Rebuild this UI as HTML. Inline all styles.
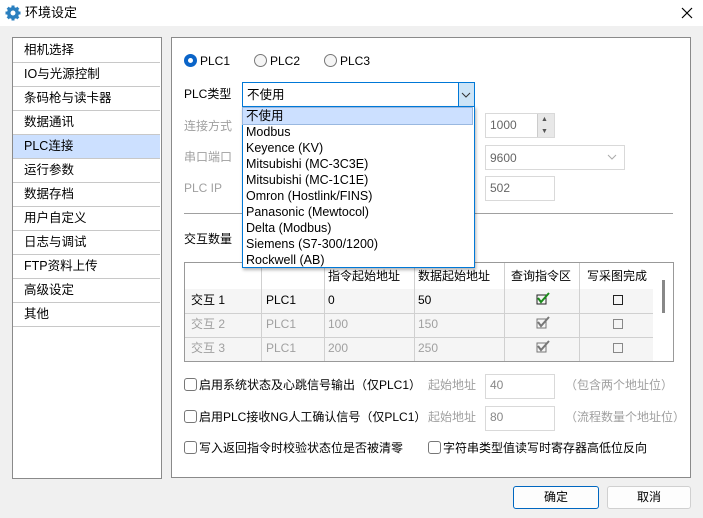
<!DOCTYPE html>
<html><head><meta charset="utf-8"><style>
*{box-sizing:border-box;margin:0;padding:0}
body{width:703px;height:518px;overflow:hidden;background:#f0f0f0;font-family:"Liberation Sans","Noto Sans CJK SC",sans-serif;font-size:12px;color:#000;position:relative}
.a{position:absolute}
.t{position:absolute;white-space:nowrap;line-height:16px}
.g{color:#a0a0a0}
.box{position:absolute;background:#fff;border:1px solid #d9d9d9}
.cb{position:absolute;width:13px;height:13px;border:1px solid #777;border-radius:3px;background:#fff}
.li{position:absolute;left:0;width:147px;height:24px;border-bottom:1px solid #c8c8c8;padding-left:11px;line-height:23px;font-size:12.5px}
.rad{position:absolute;width:13px;height:13px;border:1px solid #777;border-radius:50%;background:#f5f5f5}
.dd div{height:16px;line-height:16px;padding-left:3px;font-size:12.5px}
</style></head><body>
<div class="a" style="left:0;top:0;width:703px;height:26px;background:#fff"></div>
<svg class="a" style="left:5px;top:5px" width="16" height="16" viewBox="0 0 16 16"><circle cx="8" cy="8" r="6" fill="#2a7fbf"/><g stroke="#2a7fbf" stroke-width="3"><line x1="8" y1="0.5" x2="8" y2="15.5"/><line x1="0.5" y1="8" x2="15.5" y2="8"/><line x1="2.7" y1="2.7" x2="13.3" y2="13.3"/><line x1="13.3" y1="2.7" x2="2.7" y2="13.3"/></g><circle cx="8" cy="8" r="2.5" fill="#fff"/></svg>
<div class="t" style="left:25px;top:5px;font-size:13px">环境设定</div>
<svg class="a" style="left:681px;top:7px" width="12" height="12"><path d="M1 1L11 11M11 1L1 11" stroke="#000" stroke-width="1.2"/></svg>

<div class="a" style="left:12px;top:37px;width:150px;height:442px;background:#fff;border:1px solid #8a8a8a">
<div class="li" style="top:1px">相机选择</div>
<div class="li" style="top:25px">IO与光源控制</div>
<div class="li" style="top:49px">条码枪与读卡器</div>
<div class="li" style="top:73px">数据通讯</div>
<div class="li" style="top:97px;background:#cce0ff">PLC连接</div>
<div class="li" style="top:121px">运行参数</div>
<div class="li" style="top:145px">数据存档</div>
<div class="li" style="top:169px">用户自定义</div>
<div class="li" style="top:193px">日志与调试</div>
<div class="li" style="top:217px">FTP资料上传</div>
<div class="li" style="top:241px">高级设定</div>
<div class="li" style="top:265px">其他</div>
</div>

<div class="a" style="left:171px;top:37px;width:520px;height:441px;background:#fff;border:1px solid #8a8a8a"></div>
<div class="rad" style="left:184px;top:54px;border:4px solid #0a64c8;background:#fff"></div>
<div class="t" style="left:200px;top:53px">PLC1</div>
<div class="rad" style="left:254px;top:54px"></div>
<div class="t" style="left:270px;top:53px">PLC2</div>
<div class="rad" style="left:324px;top:54px"></div>
<div class="t" style="left:340px;top:53px">PLC3</div>

<div class="t" style="left:184px;top:86px">PLC类型</div>
<div class="t g" style="left:184px;top:118px">连接方式</div>
<div class="t g" style="left:184px;top:149px">串口端口</div>
<div class="t g" style="left:184px;top:180px">PLC IP</div>

<div class="box" style="left:485px;top:113px;width:70px;height:25px"></div>
<div class="t g" style="left:490px;top:117px;color:#666">1000</div>
<div class="a" style="left:537px;top:114px;width:17px;height:23px;background:#e8e8e8;border-left:1px solid #ccc"></div>
<div class="t" style="left:541px;top:112px;font-size:7px;color:#555">▲</div>
<div class="t" style="left:541px;top:124px;font-size:7px;color:#555">▼</div>
<div class="box" style="left:485px;top:145px;width:140px;height:25px"></div>
<div class="t" style="left:490px;top:150px;color:#666">9600</div>
<svg class="a" style="left:607px;top:154px" width="10" height="6"><path d="M1 1L5 5L9 1" stroke="#aaa" fill="none"/></svg>
<div class="box" style="left:485px;top:176px;width:70px;height:25px"></div>
<div class="t" style="left:490px;top:180px;color:#666">502</div>
<div class="a" style="left:184px;top:213px;width:489px;height:1px;background:#a0a0a0"></div>
<div class="t" style="left:184px;top:231px">交互数量</div>

<div class="a" style="left:184px;top:262px;width:490px;height:100px;border:1px solid #999;background:#f5f5f5;overflow:hidden">
<div class="a" style="left:0;top:0;width:488px;height:26px;background:#fff"></div>
<div class="a" style="left:0;top:50px;width:468px;height:1px;background:#d0d0d0"></div>
<div class="a" style="left:0;top:74px;width:468px;height:1px;background:#d0d0d0"></div>
<div class="a" style="left:76px;top:0;width:1px;height:100px;background:#d0d0d0"></div>
<div class="a" style="left:139px;top:0;width:1px;height:100px;background:#d0d0d0"></div>
<div class="a" style="left:229px;top:0;width:1px;height:100px;background:#d0d0d0"></div>
<div class="a" style="left:319px;top:0;width:1px;height:100px;background:#d0d0d0"></div>
<div class="a" style="left:394px;top:0;width:1px;height:100px;background:#d0d0d0"></div>
<div class="a" style="left:468px;top:0;width:20px;height:100px;background:#fff"></div>
<div class="a" style="left:477px;top:17px;width:3px;height:33px;background:#888"></div>
<div class="t" style="left:143px;top:5px">指令起始地址</div>
<div class="t" style="left:233px;top:5px">数据起始地址</div>
<div class="t" style="left:326px;top:5px">查询指令区</div>
<div class="t" style="left:402px;top:5px">写采图完成</div>
<div class="t" style="left:6px;top:29px">交互 1</div><div class="t" style="left:81px;top:29px">PLC1</div><div class="t" style="left:143px;top:29px">0</div><div class="t" style="left:233px;top:29px">50</div>
<div class="t g" style="left:6px;top:53px">交互 2</div><div class="t g" style="left:81px;top:53px">PLC1</div><div class="t g" style="left:143px;top:53px">100</div><div class="t g" style="left:233px;top:53px">150</div>
<div class="t g" style="left:6px;top:77px">交互 3</div><div class="t g" style="left:81px;top:77px">PLC1</div><div class="t g" style="left:143px;top:77px">200</div><div class="t g" style="left:233px;top:77px">250</div>
<svg class="a" style="left:350px;top:28px" width="16" height="14"><rect x="2" y="4" width="9" height="9" fill="none" stroke="#222"/><path d="M3 7L6 11L14 2" stroke="#1a8a1a" stroke-width="2" fill="none"/></svg>
<svg class="a" style="left:350px;top:52px" width="16" height="14"><rect x="2" y="4" width="9" height="9" fill="none" stroke="#777"/><path d="M3 7L6 11L14 2" stroke="#777" stroke-width="2" fill="none"/></svg>
<svg class="a" style="left:350px;top:76px" width="16" height="14"><rect x="2" y="4" width="9" height="9" fill="none" stroke="#777"/><path d="M3 7L6 11L14 2" stroke="#777" stroke-width="2" fill="none"/></svg>
<div class="a" style="left:428px;top:32px;width:10px;height:10px;border:1px solid #222"></div>
<div class="a" style="left:428px;top:56px;width:10px;height:10px;border:1px solid #888"></div>
<div class="a" style="left:428px;top:80px;width:10px;height:10px;border:1px solid #888"></div>
</div>

<div class="cb" style="left:184px;top:378px"></div>
<div class="t" style="left:199px;top:377px">启用系统状态及心跳信号输出（仅PLC1）</div>
<div class="t g" style="left:428px;top:377px">起始地址</div>
<div class="box" style="left:485px;top:374px;width:70px;height:25px"></div>
<div class="t g" style="left:490px;top:377px;color:#888">40</div>
<div class="t g" style="left:565px;top:377px">（包含两个地址位）</div>
<div class="cb" style="left:184px;top:410px"></div>
<div class="t" style="left:199px;top:409px">启用PLC接收NG人工确认信号（仅PLC1）</div>
<div class="t g" style="left:428px;top:409px">起始地址</div>
<div class="box" style="left:485px;top:406px;width:70px;height:25px"></div>
<div class="t g" style="left:490px;top:409px;color:#888">80</div>
<div class="t g" style="left:565px;top:409px">（流程数量个地址位）</div>
<div class="cb" style="left:184px;top:441px"></div>
<div class="t" style="left:199px;top:440px">写入返回指令时校验状态位是否被清零</div>
<div class="cb" style="left:428px;top:441px"></div>
<div class="t" style="left:443px;top:440px">字符串类型值读写时寄存器高低位反向</div>

<div class="a" style="left:513px;top:486px;width:86px;height:23px;background:#fdfdfd;border:1px solid #0067c0;border-radius:3px;text-align:center;line-height:21px">确定</div>
<div class="a" style="left:607px;top:486px;width:84px;height:23px;background:#fdfdfd;border:1px solid #d0d0d0;border-radius:3px;text-align:center;line-height:21px">取消</div>

<div class="a" style="left:242px;top:82px;width:233px;height:25px;background:#fff;border:1px solid #0078d7"></div>
<div class="t" style="left:247px;top:87px;font-size:12.5px">不使用</div>
<div class="a" style="left:458px;top:83px;width:16px;height:23px;background:#cce4f7;border-left:1px solid #0078d7"></div>
<svg class="a" style="left:461px;top:92px" width="10" height="6"><path d="M1 1L5 5L9 1" stroke="#333" fill="none"/></svg>
<div class="a dd" style="left:242px;top:106px;width:233px;height:162px;background:#fff;border:1px solid #0078d7;box-shadow:1px 2px 3px rgba(0,0,0,.3);padding-top:1px">
<div style="background:#cce0ff;margin-right:2px;outline:1px solid #99b8e0">不使用</div>
<div>Modbus</div><div>Keyence (KV)</div><div>Mitsubishi (MC-3C3E)</div><div>Mitsubishi (MC-1C1E)</div><div>Omron (Hostlink/FINS)</div><div>Panasonic (Mewtocol)</div><div>Delta (Modbus)</div><div>Siemens (S7-300/1200)</div><div>Rockwell (AB)</div>
</div>
</body></html>
